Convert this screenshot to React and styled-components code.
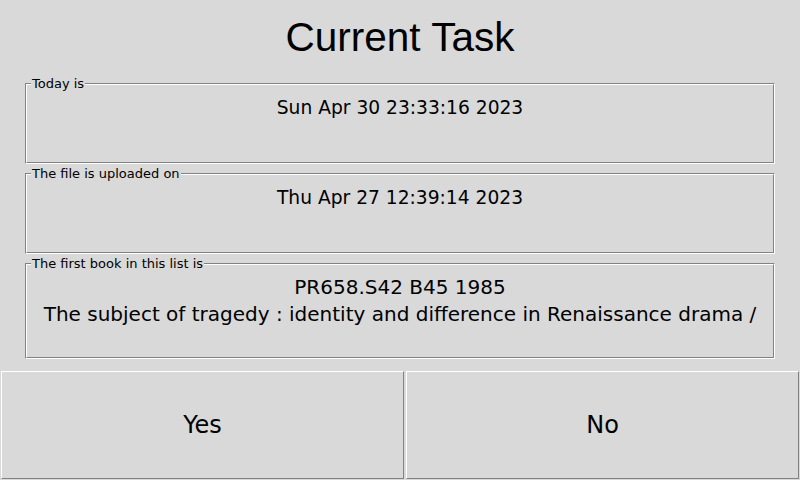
import styled, { createGlobalStyle } from "styled-components";

const GlobalStyle = createGlobalStyle`
  html, body {
    margin: 0;
    padding: 0;
    background: #d9d9d9;
    width: 800px;
    height: 480px;
    overflow: hidden;
  }
`;

const Page = styled.div`
  display: flex;
  flex-direction: column;
  height: 480px;
  background: #d9d9d9;
  color: #000;
  font-family: "DejaVu Sans", sans-serif;
`;

const Title = styled.h1`
  margin: 14px 0 0;
  font-family: "Liberation Sans", Arial, sans-serif;
  font-weight: normal;
  font-size: 40.5px;
  line-height: 46px;
  text-align: center;
`;

const Frames = styled.div`
  display: flex;
  flex-direction: column;
  gap: 9px;
  margin: 23px 25px 0;
`;

// groove border like a tk labelframe: outer line + inner line
const Frame = styled.section`
  position: relative;
  height: ${(p) => p.$height}px;
  box-sizing: border-box;
  border: 1px solid;
  border-color: #828282 #ffffff #ffffff #828282;
`;

const Inner = styled.div`
  height: 100%;
  box-sizing: border-box;
  border: 1px solid;
  border-color: #ffffff #828282 #828282 #ffffff;
  padding-top: ${(p) => p.$pad}px;
  text-align: center;
`;

const Caption = styled.span`
  position: absolute;
  top: -8px;
  left: 5px;
  padding: 0 1px;
  background: #d9d9d9;
  font-size: 13px;
  line-height: 15px;
  white-space: nowrap;
`;

const Line = styled.div`
  font-size: ${(p) => p.$size || 18.67}px;
  line-height: ${(p) => p.$lh || 22}px;
  white-space: nowrap;
`;

const Buttons = styled.div`
  display: grid;
  grid-template-columns: 405px 395px;
  height: 110px;
  margin-top: 11px;
`;

const Button = styled.button`
  margin: 1px;
  padding: 0;
  background: #d9d9d9;
  color: #000;
  font-family: "DejaVu Sans", sans-serif;
  font-size: 24px;
  border: 1px solid;
  border-color: #ffffff #828282 #828282 #ffffff;
  border-radius: 0;
  outline: none;
  cursor: pointer;
`;

const Group = ({ label, height, pad = 12, children }) => (
  <Frame $height={height}>
    <Caption>{label}</Caption>
    <Inner $pad={pad}>{children}</Inner>
  </Frame>
);

export default function App() {
  return (
    <Page>
      <GlobalStyle />
      <Title>Current Task</Title>
      <Frames>
        <Group label="Today is" height={81}>
          <Line>Sun Apr 30 23:33:16 2023</Line>
        </Group>
        <Group label="The file is uploaded on" height={81}>
          <Line>Thu Apr 27 12:39:14 2023</Line>
        </Group>
        <Group label="The first book in this list is" height={96} pad={9}>
          <Line $size={20} $lh={27}>PR658.S42 B45 1985</Line>
          <Line $size={20} $lh={27}>
            The subject of tragedy : identity and difference in Renaissance drama /
          </Line>
        </Group>
      </Frames>
      <Buttons>
        <Button>Yes</Button>
        <Button>No</Button>
      </Buttons>
    </Page>
  );
}
